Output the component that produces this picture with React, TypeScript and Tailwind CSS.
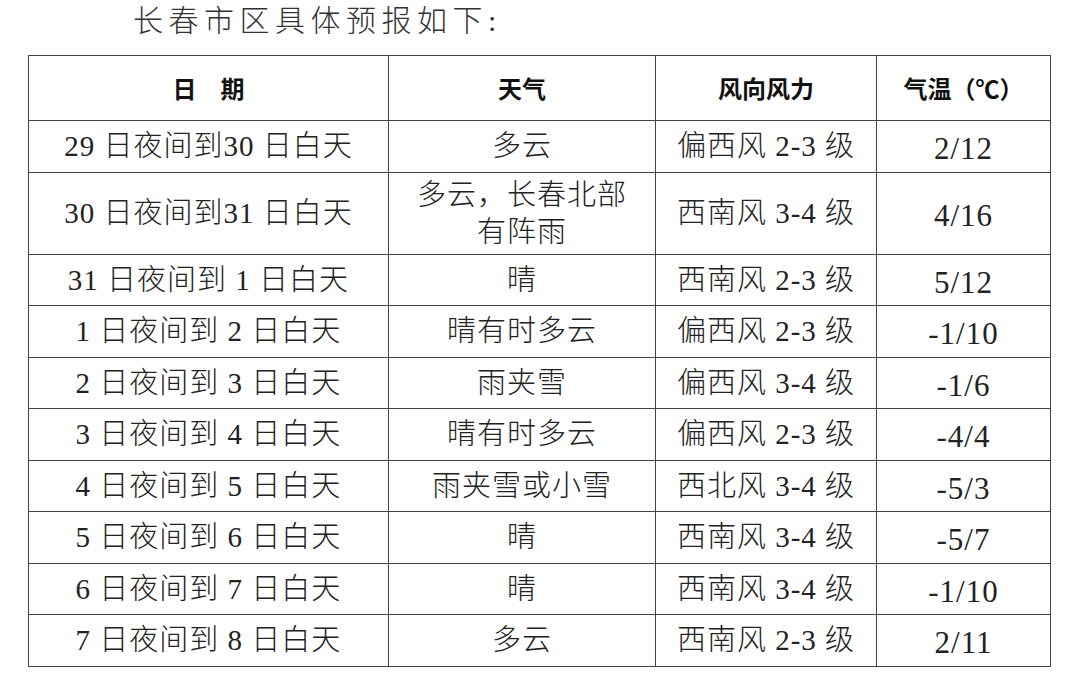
const rows: { date: string; weather: string[]; wind: string; temp: string; h: string }[] = [
  { date: '29 日夜间到30 日白天', weather: ['多云'], wind: '偏西风 2-3 级', temp: '2/12', h: 'h-[52px]' },
  { date: '30 日夜间到31 日白天', weather: ['多云，长春北部', '有阵雨'], wind: '西南风 3-4 级', temp: '4/16', h: 'h-[82px]' },
  { date: '31 日夜间到 1 日白天', weather: ['晴'], wind: '西南风 2-3 级', temp: '5/12', h: 'h-[51px]' },
  { date: '1 日夜间到 2 日白天', weather: ['晴有时多云'], wind: '偏西风 2-3 级', temp: '-1/10', h: 'h-[52px]' },
  { date: '2 日夜间到 3 日白天', weather: ['雨夹雪'], wind: '偏西风 3-4 级', temp: '-1/6', h: 'h-[51px]' },
  { date: '3 日夜间到 4 日白天', weather: ['晴有时多云'], wind: '偏西风 2-3 级', temp: '-4/4', h: 'h-[52px]' },
  { date: '4 日夜间到 5 日白天', weather: ['雨夹雪或小雪'], wind: '西北风 3-4 级', temp: '-5/3', h: 'h-[51px]' },
  { date: '5 日夜间到 6 日白天', weather: ['晴'], wind: '西南风 3-4 级', temp: '-5/7', h: 'h-[52px]' },
  { date: '6 日夜间到 7 日白天', weather: ['晴'], wind: '西南风 3-4 级', temp: '-1/10', h: 'h-[51px]' },
  { date: '7 日夜间到 8 日白天', weather: ['多云'], wind: '西南风 2-3 级', temp: '2/11', h: 'h-[52px]' },
];

const serif = "font-['Liberation_Serif','Noto_Sans_CJK_SC',serif]";
const cell = 'border border-[#444] text-center align-middle p-0';

export default function App() {
  return (
    <div className={`w-[1080px] h-[675px] bg-white overflow-hidden ${serif}`}>
      <div className="h-[55px] pl-[133px] pt-[2px] text-[30px] leading-[38px] tracking-[5.5px] font-light text-[#333]">
        长春市区具体预报如下:
      </div>
      <table className="ml-[28px] border-collapse table-fixed w-[1022px]">
        <colgroup>
          <col className="w-[360px]" />
          <col className="w-[267px]" />
          <col className="w-[221px]" />
          <col className="w-[174px]" />
        </colgroup>
        <thead>
          <tr className="h-[65px] text-[24px] font-bold text-[#111] font-['Noto_Sans_CJK_SC',sans-serif]">
            <th className={cell}>日　期</th>
            <th className={cell}>天气</th>
            <th className={cell}>风向风力</th>
            <th className={cell}>气温（℃）</th>
          </tr>
        </thead>
        <tbody className="text-[29px] leading-[37px] tracking-[1px] font-light text-[#222]">
          {rows.map((r) => (
            <tr key={r.date} className={r.h}>
              <td className={cell}>{r.date}</td>
              <td className={cell}>
                {r.weather.map((w) => (
                  <div key={w}>{w}</div>
                ))}
              </td>
              <td className={cell}>{r.wind}</td>
              <td className={`${cell} pt-[4px] text-[31px]`}>{r.temp}</td>
            </tr>
          ))}
        </tbody>
      </table>
    </div>
  );
}
